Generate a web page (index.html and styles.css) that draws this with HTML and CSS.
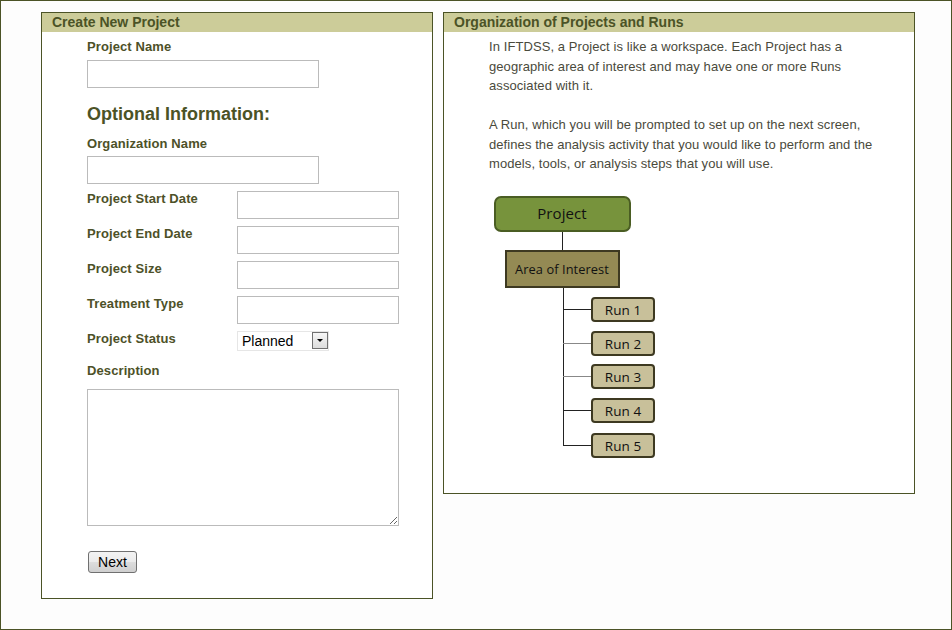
FILE: index.html
```html
<!DOCTYPE html>
<html>
<head>
<meta charset="utf-8">
<link rel="stylesheet" href="styles.css">
</head>
<body>
<div class="frame">
  <section class="panel panel-left">
    <div class="panel-head">Create New Project</div>
    <div class="form">
      <label class="lbl lbl-first">Project Name</label>
      <input class="txt wide" type="text">
      <h2 class="opt">Optional Information:</h2>
      <label class="lbl lbl-org">Organization Name</label>
      <input class="txt wide" type="text">
      <div class="rows">
        <label class="lbl">Project Start Date</label><input class="txt narrow" type="text">
        <label class="lbl">Project End Date</label><input class="txt narrow" type="text">
        <label class="lbl">Project Size</label><input class="txt narrow" type="text">
        <label class="lbl">Treatment Type</label><input class="txt narrow" type="text">
        <label class="lbl">Project Status</label>
        <span class="sel-wrap"><select class="sel"><option>Planned</option></select></span>
      </div>
      <label class="lbl lbl-desc">Description</label>
      <textarea class="desc"></textarea>
      <button class="btn" type="button">Next</button>
    </div>
  </section>
  <section class="panel panel-right">
    <div class="panel-head">Organization of Projects and Runs</div>
    <div class="info">
      <p>In IFTDSS, a Project is like a workspace. Each Project has a geographic area of interest and may have one or more Runs associated with it.</p>
      <p>A Run, which you will be prompted to set up on the next screen, defines the analysis activity that you would like to perform and the models, tools, or analysis steps that you will use.</p>
      <svg class="diagram" width="170" height="272" viewBox="0 0 170 272">
        <line x1="73.5" y1="41" x2="73.5" y2="60" stroke="#222" stroke-width="1"/>
        <line x1="74.5" y1="97" x2="74.5" y2="255.5" stroke="#222" stroke-width="1"/>
        <line x1="74" y1="119.5" x2="102" y2="119.5" stroke="#222" stroke-width="1"/>
        <line x1="74" y1="153.5" x2="102" y2="153.5" stroke="#888" stroke-width="1"/>
        <line x1="74" y1="186.5" x2="102" y2="186.5" stroke="#888" stroke-width="1"/>
        <line x1="74" y1="220.5" x2="102" y2="220.5" stroke="#222" stroke-width="1"/>
        <line x1="74" y1="255.5" x2="102" y2="255.5" stroke="#222" stroke-width="1"/>
        <rect x="6" y="7" width="135" height="34" rx="6" fill="#77933c" stroke="#4a5d23" stroke-width="2"/>
        <text x="73" y="29" class="dg dg-big">Project</text>
        <rect x="17" y="61" width="113" height="36" fill="#948a54" stroke="#3d3921" stroke-width="2"/>
        <text x="73" y="84" class="dg dg-mid">Area of Interest</text>
        <rect x="103" y="108" width="62" height="23" rx="3" fill="#c8c09a" stroke="#3d3921" stroke-width="2"/>
        <text x="134" y="124.5" class="dg">Run 1</text>
        <rect x="103" y="142" width="62" height="23" rx="3" fill="#c8c09a" stroke="#3d3921" stroke-width="2"/>
        <text x="134" y="158.5" class="dg">Run 2</text>
        <rect x="103" y="175" width="62" height="23" rx="3" fill="#c8c09a" stroke="#3d3921" stroke-width="2"/>
        <text x="134" y="191.5" class="dg">Run 3</text>
        <rect x="103" y="209" width="62" height="23" rx="3" fill="#c8c09a" stroke="#3d3921" stroke-width="2"/>
        <text x="134" y="225.5" class="dg">Run 4</text>
        <rect x="103" y="244" width="62" height="23" rx="3" fill="#c8c09a" stroke="#3d3921" stroke-width="2"/>
        <text x="134" y="260.5" class="dg">Run 5</text>
      </svg>
    </div>
  </section>
</div>
</body>
</html>
```
FILE: styles.css
```css
html, body {
  margin: 0;
  padding: 0;
  background: #ffffff;
}

.frame {
  width: 952px;
  height: 630px;
  box-sizing: border-box;
  border: 1px solid #4b5326;
  background: #fdfdfd;
  padding: 11px 0 0 40px;
  display: flex;
  align-items: flex-start;
  gap: 10px;
  font-family: "Liberation Sans", Arial, sans-serif;
}

.panel {
  box-sizing: border-box;
  border: 1px solid #4b5326;
  background: #ffffff;
}

.panel-left {
  width: 392px;
  height: 587px;
}

.panel-right {
  width: 472px;
  height: 482px;
}

.panel-head {
  height: 19px;
  line-height: 19px;
  background: #cccc99;
  color: #4b5326;
  font-weight: bold;
  font-size: 14px;
  padding-left: 10px;
}

.form {
  padding-left: 45px;
  display: flex;
  flex-direction: column;
  align-items: flex-start;
}

.lbl {
  display: block;
  font-weight: bold;
  font-size: 13px;
  line-height: 15px;
  color: #4d5128;
  letter-spacing: 0.1px;
}

.lbl-first {
  margin-top: 7px;
  margin-bottom: 6px;
}

.txt {
  box-sizing: border-box;
  height: 28px;
  border: 1px solid #bbbbbb;
  margin: 0;
  padding: 2px 4px;
  font-family: "Liberation Sans", Arial, sans-serif;
  font-size: 13px;
  background: #fff;
}

.wide {
  width: 232px;
}

.narrow {
  width: 162px;
}

.opt {
  margin: 15px 0 0 0;
  font-size: 18px;
  line-height: 22px;
  font-weight: bold;
  color: #4b5326;
}

.lbl-org {
  margin-top: 11px;
  margin-bottom: 5px;
}

.rows {
  margin-top: 7px;
  display: grid;
  grid-template-columns: 150px 162px;
  row-gap: 7px;
}

.sel-wrap {
  position: relative;
  display: inline-block;
  width: 92px;
  height: 20px;
}

.sel {
  appearance: none;
  -webkit-appearance: none;
  box-sizing: border-box;
  width: 92px;
  height: 20px;
  margin: 0;
  border: 1px solid #e6e6e6;
  background: #fff;
  padding: 0 0 0 4px;
  font-family: "Liberation Sans", Arial, sans-serif;
  font-size: 14px;
  color: #000;
  border-radius: 0;
}

.sel-wrap::after {
  content: "";
  position: absolute;
  right: 1px;
  top: 1px;
  width: 16px;
  height: 17px;
  box-sizing: border-box;
  border: 1px solid #707070;
  background: linear-gradient(#f6f6f6, #dcdcdc);
  pointer-events: none;
}

.sel-wrap::before {
  content: "";
  position: absolute;
  right: 6px;
  top: 8px;
  width: 0;
  height: 0;
  border-left: 3px solid transparent;
  border-right: 3px solid transparent;
  border-top: 3px solid #000;
  z-index: 1;
  pointer-events: none;
}

.lbl-desc {
  margin-top: 12px;
  margin-bottom: 11px;
}

.desc {
  box-sizing: border-box;
  width: 312px;
  height: 137px;
  border: 1px solid #bbbbbb;
  margin: 0;
  resize: both;
  font-family: "Liberation Sans", Arial, sans-serif;
}

.btn {
  margin: 25px 0 0 1px;
  box-sizing: border-box;
  width: 49px;
  height: 22px;
  padding: 0;
  border: 1px solid #707070;
  border-radius: 3px;
  background: linear-gradient(#f3f3f3 0%, #ebebeb 50%, #dddddd 51%, #cfcfcf 100%);
  font-family: "Liberation Sans", Arial, sans-serif;
  font-size: 14px;
  color: #000;
}

.info {
  padding: 5px 30px 0 45px;
  font-size: 13px;
  line-height: 19.5px;
  color: #4a4a3c;
  letter-spacing: 0.08px;
}

.info p {
  margin: 0 0 19.5px 0;
}

.diagram {
  display: block;
  margin-top: -3px;
}

.dg {
  font-family: "Open Sans", "Noto Sans", sans-serif;
  font-size: 13.5px;
  fill: #111;
  text-anchor: middle;
}

.dg-big {
  font-size: 15px;
}

.dg-mid {
  font-size: 12.8px;
}
```
